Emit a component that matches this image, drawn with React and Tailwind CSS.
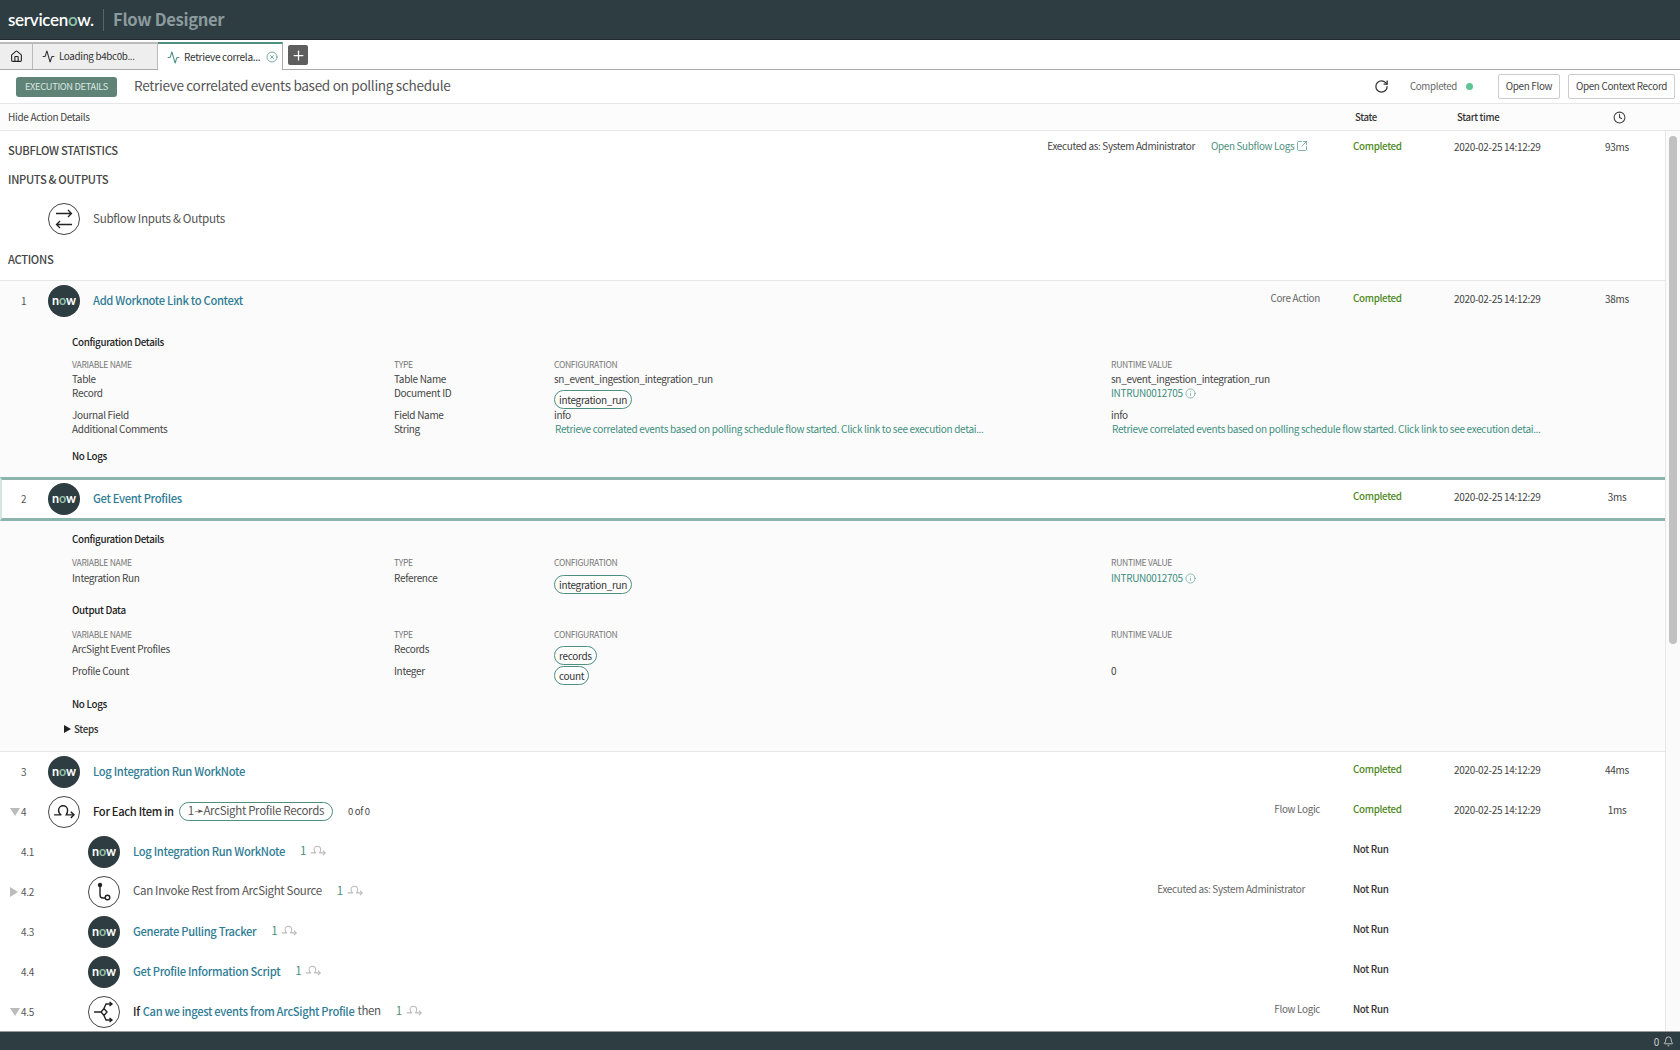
import React from 'react'
import { Home, Activity, CircleX, Plus, RotateCw, Clock, SquareArrowOutUpRight, Info, Bell } from 'lucide-react'

const NowIcon = () => (
  <div className="w-[32px] h-[32px] rounded-full bg-[#2e3d42] flex items-center justify-center shrink-0 text-white text-[12.5px] leading-none font-bold font-['Lato',sans-serif] tracking-[-0.1px]">
    n<span className="text-[#8fc1a9]">o</span>w
  </div>
)

const CircleIcon = ({ children }) => (
  <div className="w-[32px] h-[32px] rounded-full border border-[#444] bg-white flex items-center justify-center shrink-0 text-[#222]">
    {children}
  </div>
)

const SwapGlyph = () => (
  <svg width="20" height="20" viewBox="0 0 20 20" fill="none" stroke="currentColor" strokeWidth="1.3">
    <path d="M2 4.500h15.500M14 1l3.500 3.500L14 8" />
    <path d="M18 15.500H2.500M6 12l-3.500 3.500L6 19" />
  </svg>
)

const LoopGlyph = ({ size = 20, className = '' }) => (
  <svg width={size} height={size * 0.7} viewBox="0 0 24 17" fill="none" stroke="currentColor" strokeWidth="1.6" className={className}>
    <path d="M1 12h8c-2-1-3-3-3-5 0-3 2.500-5 5-5s5 2 5 5c0 2-.5 3.500-1.500 5H23" />
    <path d="M19.500 8.500 23 12l-3.500 3.500" />
  </svg>
)

const BranchGlyph = () => (
  <svg width="20" height="20" viewBox="0 0 20 20" fill="none" stroke="currentColor" strokeWidth="1.4">
    <circle cx="6" cy="3" r="1.500" fill="currentColor" />
    <path d="M6 3v10c0 2 1 3 3 3h2" />
    <circle cx="13.500" cy="15.500" r="2.300" />
  </svg>
)

const DecisionGlyph = () => (
  <svg width="22" height="22" viewBox="0 0 22 22" fill="none" stroke="currentColor" strokeWidth="1.4">
    <path d="M1 11h7l3-3.500 3 3.500-3 3.500-3-3.500" />
    <path d="M11 7.500 13 3h6M16.500 1 19 3l-2.500 2" />
    <path d="M11 14.500 13 19h6M16.500 17l2.500 2-2.500 2" />
  </svg>
)

const Pill = ({ children, className = '' }) => (
  <span className={`inline-flex items-center h-[19px] px-[4px] rounded-[10px] border border-[#4d9080] bg-white text-[#333] ${className}`}>
    {children}
  </span>
)

const Times = ({ state, time, duration }) => (
  <div className="flex items-center shrink-0 -translate-y-[3px]">
    <div className={`w-[101px] text-[9.8px] font-medium ${state === 'Completed' ? 'text-[#4f8a1f]' : 'text-[#333]'}`}>{state}</div>
    <div className="w-[143px] text-[10px] text-[#444]">{time}</div>
    <div className="w-[40px] text-center text-[10px] text-[#444]">{duration}</div>
    <div className="w-[28px]" />
  </div>
)

const Row = ({ num, arrow, sub, icon, meta, state, time, duration, className = '', children }) => (
  <div className={`flex items-center h-[40px] relative ${className}`}>
    {arrow && (
      <span className={`absolute left-[10px] w-0 h-0 ${arrow === 'down'
        ? 'border-x-[5px] border-x-transparent border-t-[8px] border-t-[#bbb]'
        : 'border-y-[5px] border-y-transparent border-l-[8px] border-l-[#bbb]'}`} />
    )}
    <div className="absolute left-[21px] -mt-[1px] text-[10px] text-[#555]">{num}</div>
    <div className={`flex items-center flex-1 min-w-0 ${sub ? 'pl-[88px]' : 'pl-[48px]'}`}>
      {icon}
      <div className="ml-[13px] -translate-y-[1px] flex items-center text-[11.5px] whitespace-nowrap">{children}</div>
      <div className="flex-1 text-right pr-[33px] text-[9.9px] text-[#666] -translate-y-[3px]">{meta}</div>
    </div>
    <Times state={state} time={time} duration={duration} />
  </div>
)

const Name = ({ children }) => <span className="text-[#2f7d95] font-medium text-[11.2px]">{children}</span>

const Repeat = () => (
  <span className="flex items-center gap-[4px] text-[#4d9080] ml-[15px]">
    1 <LoopGlyph size={16} className="text-[#bbb]" />
  </span>
)

const HeadRow = () => (
  <div className="grid grid-cols-[322px_160px_557px_1fr] h-[16px] items-center text-[8.6px] text-[#777]">
    <div>VARIABLE NAME</div>
    <div>TYPE</div>
    <div>CONFIGURATION</div>
    <div>RUNTIME VALUE</div>
  </div>
)

const Cells = ({ name, type, config, value, className = 'h-[14px]' }) => (
  <div className={`grid grid-cols-[322px_160px_557px_1fr] text-[10px] text-[#444] leading-[14px] ${className}`}>
    <div>{name}</div>
    <div>{type}</div>
    <div>{config}</div>
    <div>{value}</div>
  </div>
)

const Intrun = () => (
  <span className="flex items-center gap-[2px] text-[#3f8f7f]">
    INTRUN0012705 <Info size={11} strokeWidth={1.2} />
  </span>
)

const SubHead = ({ children, className = '' }) => (
  <div className={`h-[20px] pb-[2px] flex items-center text-[9.8px] font-medium text-[#222] ${className}`}>{children}</div>
)

const RETRIEVE_TEXT = 'Retrieve correlated events based on polling schedule flow started. Click link to see execution detai...'

export default function App() {
  return (
    <div className="h-[1050px] w-[1680px] flex flex-col overflow-hidden bg-white text-[#444] tracking-[-0.32px] font-['Noto_Sans_CJK_SC','Liberation_Sans',sans-serif]">
      <div className="h-[40px] bg-[#2e3d42] flex items-center pl-[8px] shrink-0 border-b border-[#1f2b2f]">
        <div className="w-[95px] text-white text-[17px] font-semibold font-['Lato',sans-serif] leading-none tracking-[-0.3px]">
          servicen<span className="text-[#8fc1a9]">o</span>w.
        </div>
        <div className="w-px h-[22px] bg-[#566569]" />
        <div className="ml-[9px] text-[16.6px] font-bold text-[#8b9a9c]">Flow Designer</div>
      </div>

      <div className="h-[30px] flex items-end border-b border-[#aaa] shrink-0 bg-white">
        <div className="w-[33px] h-[27px] bg-[#eee] border-t-2 border-r border-[#bbb] flex items-center justify-center text-[#222]">
          <Home size={13} />
        </div>
        <div className="w-[125px] h-[27px] bg-[#eee] border-t-2 border-r border-[#bbb] flex items-center pl-[9px] gap-[4px] text-[9.8px] text-[#333]">
          <Activity size={13} /> Loading b4bc0b...
        </div>
        <div className="w-[125px] h-[28px] -mb-px bg-white border-t-2 border-t-[#4d9080] border-r border-r-[#aaa] flex items-center pl-[9px] gap-[4px] text-[10.1px] text-[#333] whitespace-nowrap">
          <Activity size={13} className="text-[#4d9080]" /> Retrieve correla...
          <CircleX size={12} strokeWidth={1.5} className="text-[#4d9080] ml-[2px]" />
        </div>
        <div className="ml-[5px] mb-[4px] w-[20px] h-[20px] rounded-[2px] bg-[#5e5e5e] flex items-center justify-center text-white">
          <Plus size={15} />
        </div>
      </div>

      <div className="h-[34px] flex items-center border-b border-[#e6e6e6] pl-[16px] pr-[5px] shrink-0">
        <div className="w-[101px] h-[20px] rounded-[3px] bg-[#5f8377] text-[#dbe7e2] text-[9.3px] whitespace-nowrap flex items-center justify-center">EXECUTION DETAILS</div>
        <div className="ml-[17px] pb-[2px] text-[13.6px] text-[#555] flex-1">Retrieve correlated events based on polling schedule</div>
        <RotateCw size={15} className="text-[#333] mr-[21px]" />
        <div className="text-[9.7px] text-[#666]">Completed</div>
        <div className="ml-[9px] w-[7px] h-[7px] rounded-full bg-[#5fc491] mr-[25px]" />
        <button className="w-[62px] h-[25px] border border-[#ccc] rounded-[2px] text-[9.9px] text-[#444]">Open Flow</button>
        <button className="ml-[8px] w-[107px] h-[25px] border border-[#ccc] rounded-[2px] text-[9.9px] text-[#444] whitespace-nowrap">Open Context Record</button>
      </div>

      <div className="h-[27px] flex items-center bg-[#fcfcfc] border-b border-[#e6e6e6] pl-[8px] shrink-0">
        <div className="flex-1 pb-[2px] text-[10px] text-[#444]">Hide Action Details</div>
        <div className="w-[101px] pl-[5px] text-[9.6px] font-medium text-[#333]">State</div>
        <div className="w-[162px] pl-[6px] text-[9.6px] font-medium text-[#333]">Start time</div>
        <Clock size={13} className="text-[#444]" />
        <div className="w-[54px]" />
      </div>

      <div className="flex-1 flex min-h-0">
        <div className="flex-1 min-w-0 overflow-hidden">
          <div className="h-[34px] flex items-center pt-[3px]">
            <div className="pl-[8px] pt-[1px] flex-1 text-[11.2px] font-medium text-[#444]">SUBFLOW STATISTICS</div>
            <div className="text-[9.9px] text-[#444] -translate-y-[3px]">Executed as: System Administrator</div>
            <div className="ml-[16px] w-[142px] text-[9.9px] text-[#4d9080] flex items-center gap-[2px] -translate-y-[3px]">
              Open Subflow Logs <SquareArrowOutUpRight size={12} strokeWidth={1.4} />
            </div>
            <Times state="Completed" time="2020-02-25 14:12:29" duration="93ms" />
          </div>
          <div className="h-[29px] flex items-center pl-[8px] text-[11.2px] font-medium text-[#444]">INPUTS &amp; OUTPUTS</div>
          <div className="h-[45px] flex items-center pl-[48px] pt-[4px]">
            <CircleIcon><SwapGlyph /></CircleIcon>
            <div className="ml-[13px] pb-[1px] text-[11.7px] text-[#555]">Subflow Inputs &amp; Outputs</div>
          </div>
          <div className="h-[42px] flex items-center pl-[8px] text-[11.2px] font-medium text-[#444] border-b border-[#e6e6e6]">ACTIONS</div>

          <div className="bg-[#fbfbfb] h-[196px] flex flex-col">
            <Row num="1" icon={<NowIcon />} meta="Core Action" state="Completed" time="2020-02-25 14:12:29" duration="38ms">
              <Name>Add Worknote Link to Context</Name>
            </Row>
            <div className="pl-[72px] pt-[12px]">
              <SubHead>Configuration Details</SubHead>
              <div className="mt-[3px]"><HeadRow /></div>
              <Cells name="Table" type="Table Name" config="sn_event_ingestion_integration_run" value="sn_event_ingestion_integration_run" />
              <Cells name="Record" type="Document ID" config={<Pill className="mt-[4px]">integration_run</Pill>} value={<Intrun />} className="h-[22px]" />
              <Cells name="Journal Field" type="Field Name" config="info" value="info" />
              <Cells
                name="Additional Comments"
                type="String"
                config={<span className="pl-px text-[#3f8f7f] whitespace-nowrap">{RETRIEVE_TEXT}</span>}
                value={<span className="pl-px text-[#3f8f7f] whitespace-nowrap">{RETRIEVE_TEXT}</span>}
                className="h-[15px]"
              />
              <SubHead className="mt-[10px]">No Logs</SubHead>
            </div>
          </div>

          <div className="h-[44px] border-y-[3px] border-y-[#8bb5ac] border-x-2 border-x-[#d5e4e0] bg-white -mr-[15px] flex flex-col justify-center">
            <div className="mr-[13px] -ml-[2px]">
              <Row num="2" icon={<NowIcon />} state="Completed" time="2020-02-25 14:12:29" duration="3ms">
                <Name>Get Event Profiles</Name>
              </Row>
            </div>
          </div>

          <div className="bg-[#fbfbfb] h-[231px] border-b border-[#e6e6e6] pl-[72px] pt-[9px]">
            <SubHead>Configuration Details</SubHead>
            <div className="mt-[4px]"><HeadRow /></div>
            <Cells name="Integration Run" type="Reference" config={<Pill className="mt-[4px]">integration_run</Pill>} value={<Intrun />} className="h-[25px] pt-[1px]" />
            <SubHead className="mt-[6px]">Output Data</SubHead>
            <div className="mt-[5px]"><HeadRow /></div>
            <Cells name="ArcSight Event Profiles" type="Records" config={<Pill className="mt-[4px]">records</Pill>} className="h-[20px]" />
            <Cells name="Profile Count" type="Integer" config={<Pill className="mt-[2px]">count</Pill>} value="0" className="h-[26px] pt-[2px]" />
            <SubHead className="mt-[7px]">No Logs</SubHead>
            <div className="h-[20px] mt-[4px] -ml-[8px] flex items-center text-[9.8px] font-medium text-[#333]">
              <span className="w-0 h-0 mr-[3px] border-y-[4px] border-y-transparent border-l-[7px] border-l-[#222]" />
              Steps
            </div>
          </div>

          <Row num="3" icon={<NowIcon />} state="Completed" time="2020-02-25 14:12:29" duration="44ms">
            <Name>Log Integration Run WorkNote</Name>
          </Row>
          <Row num="4" arrow="down" icon={<CircleIcon><LoopGlyph size={22} /></CircleIcon>} meta="Flow Logic" state="Completed" time="2020-02-25 14:12:29" duration="1ms">
            <span className="font-medium text-[#222] text-[11.2px]">For Each Item in</span>
            <Pill className="ml-[5px] !px-[8px] !text-[#555]">1➛ArcSight Profile Records</Pill>
            <span className="ml-[15px] text-[9.5px] text-[#444]">0 of 0</span>
          </Row>
          <Row num="4.1" sub icon={<NowIcon />} state="Not Run">
            <Name>Log Integration Run WorkNote</Name><Repeat />
          </Row>
          <Row num="4.2" sub arrow="right" icon={<CircleIcon><BranchGlyph /></CircleIcon>} meta={<span className="pr-[15px]">Executed as: System Administrator</span>} state="Not Run">
            <span className="text-[#555]">Can Invoke Rest from ArcSight Source</span><Repeat />
          </Row>
          <Row num="4.3" sub icon={<NowIcon />} state="Not Run">
            <Name>Generate Pulling Tracker</Name><Repeat />
          </Row>
          <Row num="4.4" sub icon={<NowIcon />} state="Not Run">
            <Name>Get Profile Information Script</Name><Repeat />
          </Row>
          <Row num="4.5" sub arrow="down" icon={<CircleIcon><DecisionGlyph /></CircleIcon>} meta="Flow Logic" state="Not Run">
            <span className="font-medium text-[#222] text-[11.2px] mr-[3px]">If</span>
            <Name>Can we ingest events from ArcSight Profile</Name>
            <span className="ml-[3px] text-[#555]">then</span>
            <Repeat />
          </Row>
        </div>

        <div className="w-[15px] shrink-0 bg-[#fafafa] border-l border-[#e8e8e8] pt-[5px] flex justify-center">
          <div className="w-[8px] h-[508px] rounded-full bg-[#c1c1c1]" />
        </div>
      </div>

      <div className="h-[19px] shrink-0 bg-[#2e3d42] border-t border-[#999] flex items-center justify-end pr-[6px] gap-[4px] text-[#ccc] text-[10px]">
        0 <Bell size={11} />
      </div>
    </div>
  )
}
